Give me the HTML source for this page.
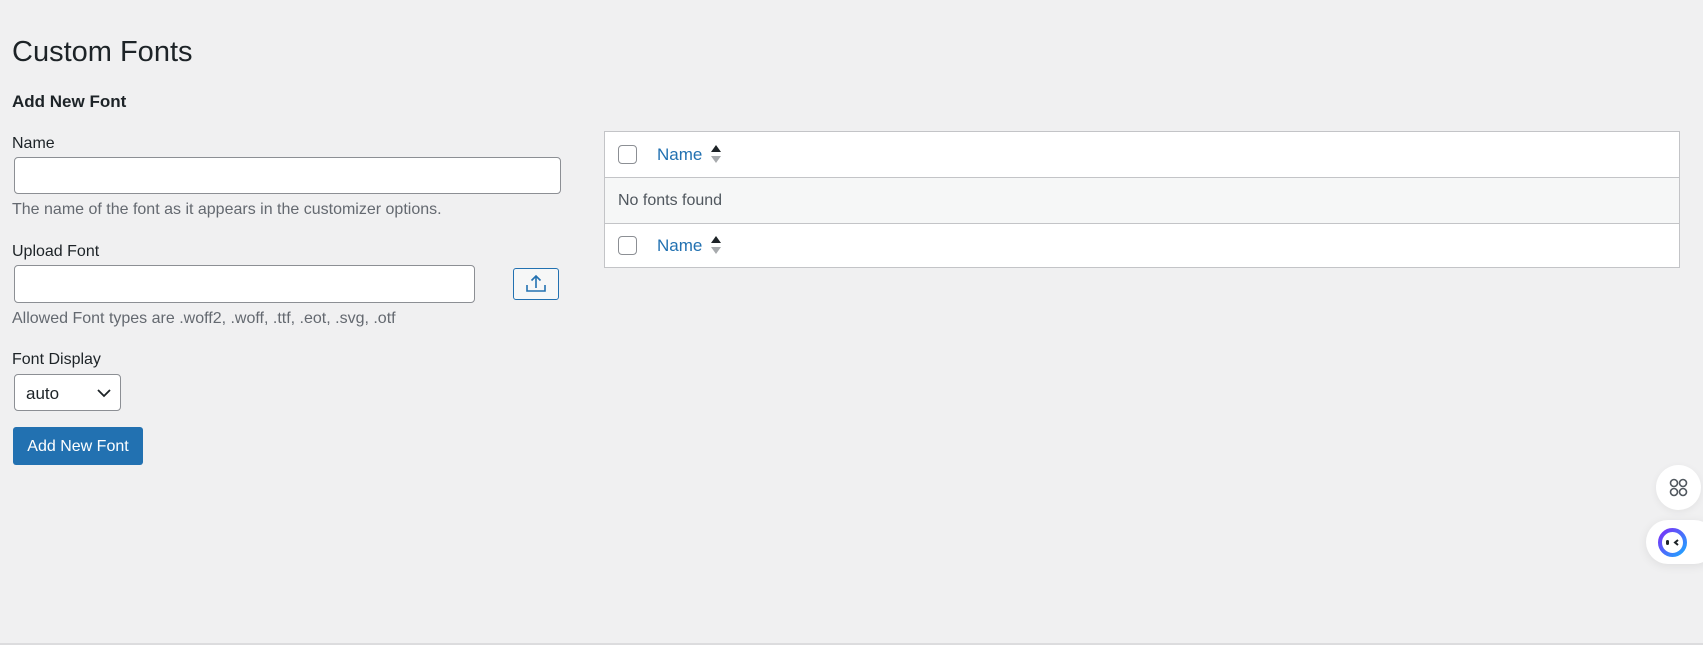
<!DOCTYPE html>
<html><head><style>
body{margin:0;width:1703px;height:645px;background:#f0f0f1;font-family:"Liberation Sans",sans-serif;color:#1d2327;position:relative;overflow:hidden}
.a{position:absolute}
h1{position:absolute;left:12px;top:36px;margin:0;font-weight:400;font-size:29px}
.lbl{font-size:16px;color:#1d2327}
.help{font-size:16px;color:#646970}
.inp{background:#fff;border:1px solid #8c8f94;border-radius:4px;box-sizing:border-box}
.cb{position:absolute;width:19px;height:19px;border:1px solid #8c8f94;border-radius:4px;background:#fff;box-sizing:border-box}
.nm{position:absolute;color:#2271b1;font-size:17px}
</style></head><body>
<h1>Custom Fonts</h1>
<div class="a" style="left:12px;top:92px;font-size:17px;font-weight:bold">Add New Font</div>
<div class="a lbl" style="left:12px;top:135px">Name</div>
<div class="a inp" style="left:14px;top:157px;width:547px;height:37px"></div>
<div class="a help" style="left:12px;top:201px">The name of the font as it appears in the customizer options.</div>
<div class="a lbl" style="left:12px;top:243px">Upload Font</div>
<div class="a inp" style="left:14px;top:265px;width:461px;height:38px"></div>
<div class="a" style="left:513px;top:268px;width:46px;height:32px;border:1px solid #2271b1;border-radius:3px;box-sizing:border-box;background:#f6f7f7">
<svg width="44" height="30" viewBox="0 0 44 30"><path d="M22 7v12M17.5 11.5L22 7l4.5 4.5M13 16v6h18v-6" fill="none" stroke="#2271b1" stroke-width="1.6"/></svg></div>
<div class="a help" style="left:12px;top:310px">Allowed Font types are .woff2, .woff, .ttf, .eot, .svg, .otf</div>
<div class="a lbl" style="left:12px;top:351px">Font Display</div>
<div class="a inp" style="left:14px;top:374px;width:107px;height:37px;font-size:17px;padding:9px 0 0 11px">auto
<svg class="a" style="left:82px;top:13px" width="14" height="10"><path d="M1 2l6 6 6-6" fill="none" stroke="#1d2327" stroke-width="1.8"/></svg></div>
<div class="a" style="left:13px;top:427px;width:130px;height:38px;background:#2271b1;border-radius:3px;color:#fff;font-size:16px;line-height:40px;text-align:center">Add New Font</div>

<div class="a" style="left:604px;top:131px;width:1076px;height:137px;background:#fff;border:1px solid #c3c4c7;box-sizing:border-box">
 <div class="a" style="left:0;top:45px;width:100%;height:45px;background:#f6f7f7;border-top:1px solid #c3c4c7;border-bottom:1px solid #c3c4c7"></div>
 <div class="cb" style="left:13px;top:13px"></div>
 <div class="nm" style="left:52px;top:13px">Name</div>
 <svg class="a" style="left:105px;top:12px" width="12" height="22"><path d="M1 8l5-7 5 7z" fill="#1d2327"/><path d="M1 12l5 7 5-7z" fill="#a7aaad"/></svg>
 <div class="a" style="left:13px;top:60px;font-size:16px;color:#50575e">No fonts found</div>
 <div class="cb" style="left:13px;top:104px"></div>
 <div class="nm" style="left:52px;top:104px">Name</div>
 <svg class="a" style="left:105px;top:103px" width="12" height="22"><path d="M1 8l5-7 5 7z" fill="#1d2327"/><path d="M1 12l5 7 5-7z" fill="#a7aaad"/></svg>
</div>

<div class="a" style="left:1656px;top:465px;width:45px;height:45px;border-radius:50%;background:#fff;box-shadow:0 2px 8px rgba(0,0,0,.06)">
<svg class="a" style="left:12px;top:12px" width="21" height="21" viewBox="0 0 21 21" fill="none" stroke="#50575e" stroke-width="1.6"><circle cx="6" cy="6" r="3.5"/><circle cx="15" cy="6" r="3.5"/><circle cx="6" cy="15" r="3.5"/><circle cx="15" cy="15" r="3.5"/></svg></div>
<div class="a" style="left:1646px;top:520px;width:70px;height:44px;border-radius:22px;background:#fff;box-shadow:0 2px 10px rgba(0,0,0,.08)">
<svg class="a" style="left:11px;top:7px" width="31" height="31" viewBox="0 0 31 31"><defs><linearGradient id="g" x1="0" y1="0" x2="1" y2="1"><stop offset="0" stop-color="#7b2ff7"/><stop offset="1" stop-color="#1ea7ff"/></linearGradient></defs><circle cx="15.5" cy="15.5" r="12.5" fill="#fff" stroke="url(#g)" stroke-width="4"/><rect x="9" y="13" width="3" height="5" rx="1.5" fill="#1d2327"/><path d="M21 13l-3 2.5 3 2.5" fill="none" stroke="#1d2327" stroke-width="2"/></svg></div>
<div class="a" style="left:0;top:643px;width:1703px;height:2px;background:#dcdcde"></div>
</body></html>
